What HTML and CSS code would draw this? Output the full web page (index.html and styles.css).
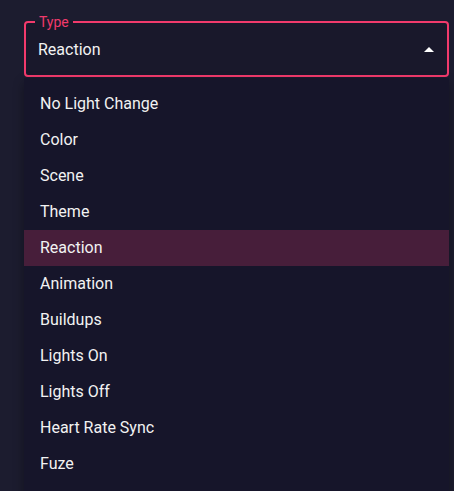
FILE: index.html
```html
<!DOCTYPE html>
<html lang="en">
<head>
  <meta charset="UTF-8" />
  <title>Type select</title>
  <link rel="stylesheet" href="styles.css">
</head>
<body>
  <div class="select">
    <fieldset class="field">
      <legend>Type</legend>
      <span class="value">Reaction</span>
      <svg class="arrow" width="10" height="5" viewBox="0 0 10 5"><path d="M0 5 L5 0 L10 5 Z" fill="#fff"/></svg>
    </fieldset>
    <ul class="menu">
      <li>No Light Change</li>
      <li>Color</li>
      <li>Scene</li>
      <li>Theme</li>
      <li class="selected">Reaction</li>
      <li>Animation</li>
      <li>Buildups</li>
      <li>Lights On</li>
      <li>Lights Off</li>
      <li>Heart Rate Sync</li>
      <li>Fuze</li>
    </ul>
  </div>
</body>
</html>
```

FILE: styles.css
```css
:root {
  --bg: #1c1c2f;
  --field: #19182b;
  --menu: #16152a;
  --pink: #f23a6c;
  --hl: #471e3a;
  --text: #f2f2f2;
}
* { margin: 0; padding: 0; box-sizing: border-box; }
html, body { height: 100%; overflow: hidden; }
body { background: var(--bg); font-family: Roboto, "Liberation Sans", sans-serif; color: var(--text); padding: 14px 5px 0 24px; }
.select { position: relative; }
.field { display: flex; align-items: center; justify-content: space-between; height: 63px; border: 2px solid var(--pink); border-radius: 4px; background: var(--field); padding: 0 12px 6px 12px; }
.field legend { color: var(--pink); font-size: 14px; line-height: 16px; padding: 0 4px; margin-left: -3px; }
.value { font-size: 16px; }
.arrow { margin-right: 1px; }
.menu { position: absolute; left: 0; right: 0; top: 64px; height: 420px; list-style: none; background: var(--menu); padding-top: 8px; box-shadow: 0 5px 10px rgba(0,0,0,0.35); }
.menu li { height: 36px; line-height: 36px; padding-left: 16px; font-size: 16px; }
.menu li.selected { background: var(--hl); }
```
